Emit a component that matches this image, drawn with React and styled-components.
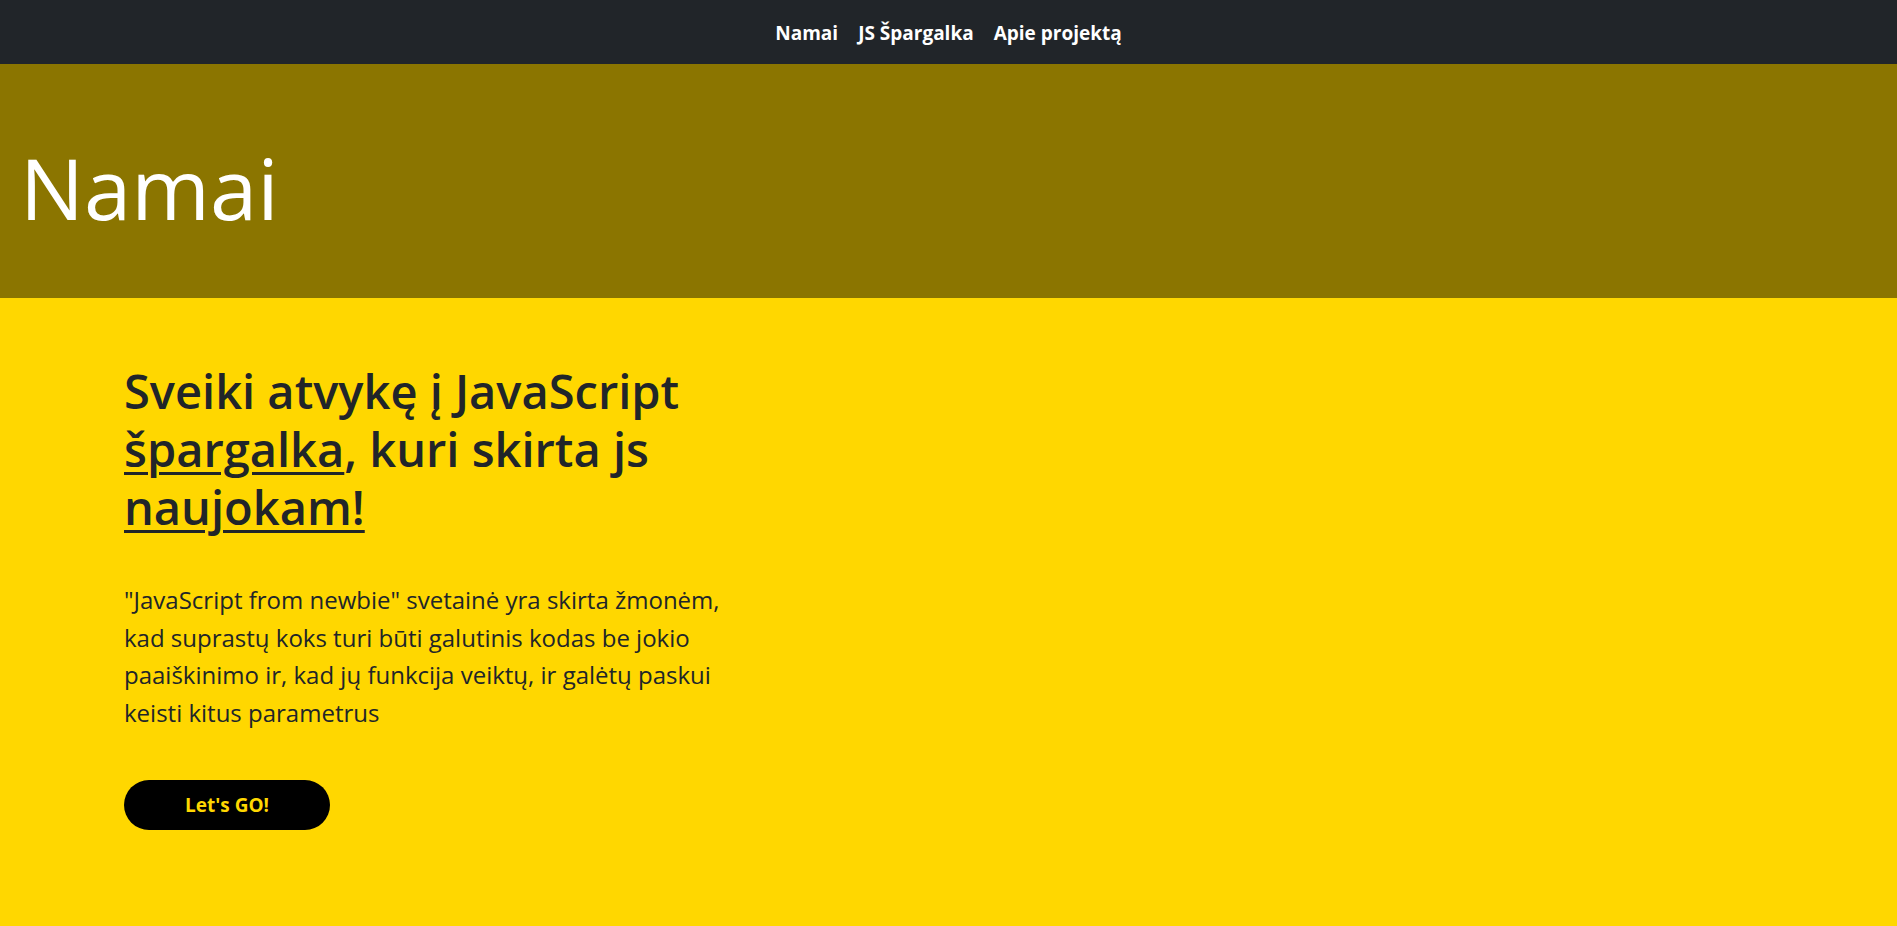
import React from "react";
import styled, { createGlobalStyle } from "styled-components";

const GlobalStyle = createGlobalStyle`
  html, body {
    margin: 0;
    padding: 0;
  }

  body {
    font-family: "Open Sans", "Noto Sans", sans-serif;
    color: #212529;
    background: #ffd700;
  }

  * {
    box-sizing: border-box;
  }
`;

const links = ["Namai", "JS Špargalka", "Apie projektą"];

function App() {
  return (
    <>
      <GlobalStyle />
      <Page>
        <NavBar>
          <NavList>
            {links.map((link) => (
              <NavLink key={link} href="#">
                {link}
              </NavLink>
            ))}
          </NavList>
        </NavBar>

        <Banner>
          <BannerTitle>Namai</BannerTitle>
        </Banner>

        <Main>
          <Intro>
            <Heading>
              Sveiki atvykę į JavaScript <Underlined>špargalka</Underlined>, kuri skirta js{" "}
              <Underlined>naujokam!</Underlined>
            </Heading>
            <Lead>
              "JavaScript from newbie" svetainė yra skirta žmonėm, kad suprastų koks turi būti
              galutinis kodas be jokio paaiškinimo ir, kad jų funkcija veiktų, ir galėtų paskui
              keisti kitus parametrus
            </Lead>
            <GoButton>Let's GO!</GoButton>
          </Intro>
        </Main>
      </Page>
    </>
  );
}

const Page = styled.div`
  min-height: 100vh;
  display: flex;
  flex-direction: column;
`;

const NavBar = styled.nav`
  height: 64px;
  background: #212529;
  display: flex;
  align-items: center;
  justify-content: center;
`;

const NavList = styled.div`
  display: flex;
  gap: 20px;
  padding-top: 2px;
`;

const NavLink = styled.a`
  color: #ffffff;
  font-size: 19px;
  font-weight: 700;
  text-decoration: none;
`;

const Banner = styled.header`
  height: 234px;
  background: #8b7500;
  display: flex;
  align-items: center;
  padding: 0 20px;
`;

const BannerTitle = styled.h1`
  margin: 12px 0 0;
  color: #ffffff;
  font-size: 85px;
  font-weight: 400;
  line-height: 1.2;
`;

const Main = styled.main`
  flex: 1;
  background: #ffd700;
  padding: 64px 0 60px 124px;
`;

const Intro = styled.section`
  width: 600px;
`;

const Heading = styled.h2`
  margin: 0 0 45px;
  font-size: 47px;
  font-weight: 600;
  line-height: 58px;
  color: #212529;
`;

const Underlined = styled.span`
  text-decoration: underline;
  text-decoration-thickness: 3px;
  text-underline-offset: 5px;
`;

const Lead = styled.p`
  margin: 0 0 49px;
  font-size: 24px;
  line-height: 37.5px;
  color: #212529;
`;

const GoButton = styled.button`
  width: 206px;
  height: 50px;
  border: none;
  border-radius: 25px;
  background: #000000;
  color: #ffd700;
  font-family: inherit;
  font-size: 19px;
  font-weight: 700;
  cursor: pointer;
`;

export default App;
